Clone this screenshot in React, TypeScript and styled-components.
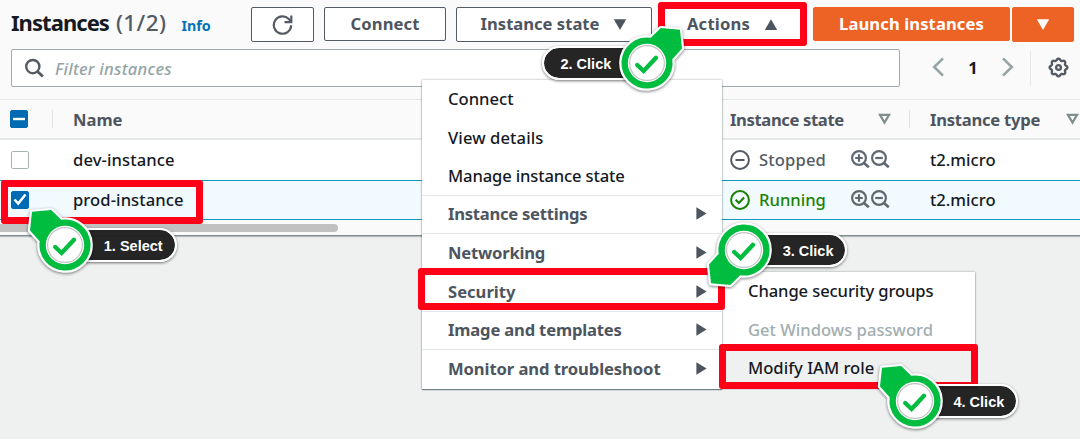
import React from 'react';
import styled, { createGlobalStyle, css } from 'styled-components';

const GlobalStyle = createGlobalStyle`
  *, *::before, *::after { box-sizing: border-box; }
  body {
    margin: 0;
    background: #eff1f1;
    font-family: 'Noto Sans', 'Open Sans', sans-serif;
    font-size: 16.6px;
    font-weight: 500;
    color: #16191f;
    overflow: hidden;
  }
`;

const Page = styled.div`
  position: relative;
  width: 1080px;
  height: 439px;
  overflow: hidden;
`;

const Panel = styled.section`
  background: #fafafa;
  border-bottom: 1px solid #7f8d8f;
  box-shadow: 0 1px 1px rgba(0, 28, 36, 0.25);
`;

const Text = styled.span<{ $track?: number }>`
  letter-spacing: ${({ $track = 0 }) => $track}px;
  white-space: nowrap;
`;

const Toolbar = styled.header`
  display: flex;
  align-items: flex-start;
  gap: 10px;
  height: 49px;
  padding: 7px 6px 0 11px;
`;

const Heading = styled.h1`
  display: flex;
  align-items: baseline;
  width: 230px;
  height: 34px;
  margin: 0;
  font-size: 22px;
  font-weight: 700;
  line-height: 31px;
`;

const Count = styled(Text)`
  margin-left: 7px;
  font-size: 22.5px;
  font-weight: 500;
  color: #545b64;
`;

const InfoLink = styled.a`
  margin-left: 15px;
  font-size: 14.3px;
  color: #0073bb;
`;

const Button = styled.button<{ $width: number; $primary?: boolean; $tall?: boolean }>`
  display: flex;
  align-items: center;
  justify-content: center;
  flex: none;
  width: ${({ $width }) => $width}px;
  height: ${({ $tall }) => ($tall ? 35 : 34)}px;
  padding: ${({ $tall }) => ($tall ? 0 : 1)}px 0 0;
  font: 700 16.6px/1 'Noto Sans', 'Open Sans', sans-serif;
  color: #4d555f;
  background: #fff;
  border: 1px solid #545b64;
  border-radius: 2px;
  ${({ $primary }) => $primary && css`
    color: #fff;
    background: #ec6325;
    border-color: #ec6325;
  `}
`;

const SplitButton = styled.div`
  display: flex;
  gap: 2px;
`;

const CaretSvg = styled.svg<{ $gap?: number }>`
  flex: none;
  margin-left: ${({ $gap = 0 }) => $gap}px;
`;

const FilterBar = styled.div`
  display: flex;
  align-items: center;
  height: 50px;
  padding: 0 11px 12px;
`;

const SearchField = styled.label`
  display: flex;
  align-items: center;
  gap: 11px;
  width: 889px;
  height: 38px;
  padding-left: 13px;
  background: #fff;
  border: 1px solid #9cabac;
  border-radius: 2px;
  font-style: italic;
  color: #95a5a6;
`;

const Pager = styled.nav`
  display: flex;
  align-items: center;
  justify-content: space-between;
  width: 82px;
  margin-left: 32px;
  padding-bottom: 2px;
  font-size: 16.5px;
  font-weight: 700;
`;

const Settings = styled.div`
  display: flex;
  align-items: center;
  justify-content: flex-end;
  width: 39px;
  height: 35px;
  margin-left: 16px;
  padding-bottom: 1px;
  border-left: 1px solid #e6e9e9;
`;

const Row = styled.div<{ $kind?: 'head' | 'selected' }>`
  display: grid;
  grid-template-columns: 52px 657px 200px 171px;
  align-items: center;
  height: 40px;
  background: #fff;
  ${({ $kind }) => $kind === 'head' && css`
    height: 41px;
    font-weight: 700;
    color: #4d555f;
    background: #fafafa;
    border-top: 1px solid #e6e9e9;
    border-bottom: 2px solid #e6e9e9;
  `}
  ${({ $kind }) => $kind === 'selected' && css`
    background: #f0faff;
    border-top: 1px solid #1598bf;
    border-bottom: 1px solid #1598bf;
  `}
`;

const HeadCell = styled.div`
  display: flex;
  align-items: center;
  justify-content: space-between;
  height: 18px;
  padding: 0 18px 0 20px;
  border-left: 1px solid #e0e4e4;
  &:nth-child(3) { border-color: transparent; }
  &:last-child { padding-right: 1px; }
`;

const CheckCell = styled.div<{ $inset?: number }>`
  display: flex;
  padding-left: ${({ $inset = 11 }) => $inset}px;
`;

const Cell = styled.div<{ $tone?: string }>`
  display: flex;
  align-items: center;
  padding-left: 21px;
  color: ${({ $tone = '#16191f' }) => $tone};
  & > span { padding-bottom: 2px; }
  & > svg { flex: none; margin-right: 9px; }
`;

const Magnifiers = styled.span`
  display: flex;
  gap: 1px;
  margin-left: auto;
  padding-right: 19px;
`;

const Checkbox = styled.span<{ $on?: boolean }>`
  display: flex;
  align-items: center;
  justify-content: center;
  width: 18px;
  height: 18px;
  margin-bottom: 1px;
  border: 1px solid ${({ $on }) => ($on ? '#006bb3' : '#a5b2b3')};
  border-radius: 2px;
  background: ${({ $on }) => ($on ? '#006bb3' : '#fff')};
`;

const ScrollTrack = styled.div`
  height: 15px;
  padding-top: 4px;
`;

const ScrollThumb = styled.div`
  width: 338px;
  height: 8px;
  border-radius: 0 4px 4px 0;
  background: #c1c1c1;
`;

const Menu = styled.div<{ $x: number; $y: number; $width: number }>`
  position: absolute;
  left: ${({ $x }) => $x}px;
  top: ${({ $y }) => $y}px;
  width: ${({ $width }) => $width}px;
  background: #fff;
  box-shadow: 0 1px 1px rgba(0, 28, 36, 0.45), 0 0 2px rgba(0, 28, 36, 0.4);
`;

const MenuItem = styled.div<{ $group?: boolean; $disabled?: boolean; $active?: boolean }>`
  display: flex;
  align-items: center;
  justify-content: space-between;
  height: 38.6px;
  padding: 0 14px 1.6px 26px;
  color: ${({ $disabled }) => ($disabled ? '#a2aeb0' : '#16191f')};
  background: ${({ $active }) => ($active ? '#eff1f1' : 'transparent')};
  ${({ $group }) => $group && css`
    font-weight: 700;
    color: #4d555f;
    padding-bottom: 2.2px;
    box-shadow: 0 -1px 0 #e3e7e7;
  `}
`;

const Highlight = styled.div<{ $x: number; $y: number; $w: number; $h: number }>`
  position: absolute;
  left: ${({ $x }) => $x}px;
  top: ${({ $y }) => $y}px;
  width: ${({ $w }) => $w}px;
  height: ${({ $h }) => $h}px;
  border: 7px solid #ff0018;
  border-radius: 3px;
`;

const CalloutBox = styled.div<{ $x: number; $y: number }>`
  position: absolute;
  left: ${({ $x }) => $x}px;
  top: ${({ $y }) => $y}px;
`;

const CalloutLabel = styled.div<{ $left?: boolean; $width: number }>`
  position: absolute;
  top: -17px;
  ${({ $left }) => ($left ? 'right: 0;' : 'left: 0;')}
  width: ${({ $width }) => $width}px;
  height: 34px;
  padding: ${({ $left }) => ($left ? '0 0 0 17px' : '0 0 0 37px')};
  border: 2px solid #fff;
  border-radius: ${({ $left }) => ($left ? '17px 0 0 17px' : '0 17px 17px 0')};
  background: rgba(30, 30, 30, 0.97);
  background-clip: padding-box;
  box-shadow: 0 1px 3px rgba(0, 0, 0, 0.55);
  font: 700 14.5px/32px 'Liberation Sans', Arial, sans-serif;
  color: #fff;
  white-space: nowrap;
`;

const CalloutMark = styled.svg`
  position: absolute;
  left: -42px;
  top: -42px;
  filter: drop-shadow(0 1px 1.5px rgba(0, 0, 0, 0.5));
`;

type CaretProps = { dir?: 'down' | 'up' | 'right'; gap?: number; color?: string };

function Caret({ dir = 'down', gap, color = 'currentColor' }: CaretProps) {
  const paths = { down: 'M.8 1.2h12.4L7 12Z', up: 'M.8 12h12.4L7 1.2Z', right: 'M2.4 .2v12.6L12.6 6.5Z' };
  return (
    <CaretSvg $gap={gap} width="14" height="13" viewBox="0 0 14 13">
      <path d={paths[dir]} fill={color} />
    </CaretSvg>
  );
}

function SortIcon() {
  return (
    <svg width="13" height="12" viewBox="0 0 13 12">
      <path d="M1.9 1.8h9.2L6.5 9.5Z" fill="#fff" stroke="#7f8d8e" strokeWidth="2.3" />
    </svg>
  );
}

function Zoom({ plus }: { plus?: boolean }) {
  return (
    <svg width="19" height="20" viewBox="0 0 19 20" fill="none" stroke="#5f6870" strokeWidth="2.2">
      <circle cx="8" cy="9" r="6.9" />
      <path d="M13 14l4.8 4.3" strokeWidth="2.6" />
      <path d={plus ? 'M4.2 9h7.6M8 5.2v7.6' : 'M4.2 9h7.6'} />
    </svg>
  );
}

function GearIcon() {
  const teeth = Array.from({ length: 64 }, (_, i) => {
    const a = (i / 64) * Math.PI * 2;
    const r = 8 + 0.9 * Math.cos(8 * a);
    return `${(10.5 + r * Math.cos(a)).toFixed(2)},${(10.5 + r * Math.sin(a)).toFixed(2)}`;
  }).join(' ');
  return (
    <svg width="21" height="21" viewBox="0 0 21 21" fill="none" stroke="#545b64" strokeWidth="2.4">
      <polygon points={teeth} strokeLinejoin="round" />
      <circle cx="10.5" cy="10.5" r="2.4" />
    </svg>
  );
}

type CalloutProps = {
  x: number;
  y: number;
  label: string;
  width: number;
  left?: boolean;
  flip?: 'x' | 'y';
};

const POINTER = 'M-33 -33.2L-13.8 -34.9L-3.8 -25.3A25.6 25.6 0 1 1 -25.3 -3.8L-35 -14.5Z';

function Callout({ x, y, label, width, left, flip }: CalloutProps) {
  const transform = flip === 'x' ? 'scale(-1 1)' : flip === 'y' ? 'scale(1 -1)' : undefined;
  return (
    <CalloutBox $x={x} $y={y}>
      <CalloutLabel $left={left} $width={width}>{label}</CalloutLabel>
      <CalloutMark width="84" height="84" viewBox="-42 -42 84 84">
        <g transform={transform}>
          <path d={POINTER} fill="#fff" stroke="#fff" strokeWidth="4.4" strokeLinejoin="round" />
          <path d={POINTER} fill="#00bd40" />
        </g>
        <circle r="19.2" fill="#fff" />
        <circle r="17.4" fill="#fff" stroke="#c4c4c4" strokeWidth="1.2" />
        <path d="M-9.8 2L-3.4 8L9 -5.2" fill="none" stroke="#00bd40" strokeWidth="4.4" strokeLinecap="round" />
      </CalloutMark>
    </CalloutBox>
  );
}

export default function App() {
  return (
    <Page>
      <GlobalStyle />
      <Panel>
        <Toolbar>
          <Heading>
            <Text $track={-0.95}>Instances</Text>
            <Count $track={0.4}>(1/2)</Count>
            <InfoLink><Text>Info</Text></InfoLink>
          </Heading>
          <Button $width={63} $tall aria-label="Refresh">
            <svg width="22" height="22" viewBox="0 0 22 22" fill="none" stroke="#545b64" strokeWidth="2.2">
              <path d="M19.2 11.3A8.7 8.7 0 1 1 16.8 5L19 7.6" />
              <path d="M19.3 1.5v6.6h-6.8" />
            </svg>
          </Button>
          <Button $width={122}><Text $track={0.1}>Connect</Text></Button>
          <Button $width={196} $tall><Text>Instance state</Text><Caret gap={14} /></Button>
          <Button $width={141}><Text $track={0.2}>Actions</Text><Caret dir="up" gap={14} /></Button>
          <SplitButton>
            <Button $width={197} $primary><Text $track={0.1}>Launch instances</Text></Button>
            <Button $width={62} $primary $tall aria-label="More launch options"><Caret /></Button>
          </SplitButton>
        </Toolbar>
        <FilterBar>
          <SearchField>
            <svg width="19" height="20" viewBox="0 0 19 20" fill="none" stroke="#545b64" strokeWidth="2.4">
              <circle cx="7.8" cy="8.6" r="6.6" />
              <path d="M12.5 13.4l5.4 5.2" strokeWidth="2.8" />
            </svg>
            <Text $track={0.24}>Filter instances</Text>
          </SearchField>
          <Pager>
            <svg width="12" height="20" viewBox="0 0 12 20" fill="none" stroke="#95a5a6" strokeWidth="2.6">
              <path d="M11 1.3L2.2 10l8.8 8.7" />
            </svg>
            <span>1</span>
            <svg width="12" height="20" viewBox="0 0 12 20" fill="none" stroke="#95a5a6" strokeWidth="2.6">
              <path d="M1 1.3L9.8 10L1 18.7" />
            </svg>
          </Pager>
          <Settings><GearIcon /></Settings>
        </FilterBar>
        <Row $kind="head">
          <CheckCell $inset={10}>
            <Checkbox $on>
              <svg width="12" height="4"><path d="M0 2h12" stroke="#fff" strokeWidth="2.4" /></svg>
            </Checkbox>
          </CheckCell>
          <HeadCell><Text>Name</Text></HeadCell>
          <HeadCell><Text $track={-0.36}>Instance state</Text><SortIcon /></HeadCell>
          <HeadCell><Text $track={-0.25}>Instance type</Text><SortIcon /></HeadCell>
        </Row>
        <Row>
          <CheckCell><Checkbox /></CheckCell>
          <Cell><Text $track={0.1}>dev-instance</Text></Cell>
          <Cell $tone="#545b64">
            <svg width="20" height="20" viewBox="0 0 20 20" fill="none" stroke="#545b64" strokeWidth="2">
              <circle cx="10" cy="10" r="8.9" /><path d="M5.5 10h9" />
            </svg>
            <Text $track={0.15}>Stopped</Text>
            <Magnifiers><Zoom plus /><Zoom /></Magnifiers>
          </Cell>
          <Cell><Text>t2.micro</Text></Cell>
        </Row>
        <Row $kind="selected">
          <CheckCell>
            <Checkbox $on>
              <svg width="14" height="13" viewBox="0 0 14 13">
                <path d="M1.5 6.5l3.7 4L12.5 1.5" fill="none" stroke="#fff" strokeWidth="2.5" />
              </svg>
            </Checkbox>
          </CheckCell>
          <Cell><Text $track={0.07}>prod-instance</Text></Cell>
          <Cell $tone="#1d8102">
            <svg width="20" height="20" viewBox="0 0 20 20" fill="none" stroke="#1d8102" strokeWidth="2">
              <circle cx="10" cy="10" r="8.9" /><path d="M5.7 9.8l3.2 3.2 5.2-5.4" strokeWidth="2.2" />
            </svg>
            <Text>Running</Text>
            <Magnifiers><Zoom plus /><Zoom /></Magnifiers>
          </Cell>
          <Cell><Text>t2.micro</Text></Cell>
        </Row>
        <ScrollTrack><ScrollThumb /></ScrollTrack>
      </Panel>

      <Menu $x={722} $y={272} $width={253}>
        <MenuItem><Text $track={-0.11}>Change security groups</Text></MenuItem>
        <MenuItem $disabled><Text>Get Windows password</Text></MenuItem>
        <MenuItem $active><Text>Modify IAM role</Text></MenuItem>
      </Menu>
      <Menu $x={422} $y={80} $width={300}>
        <MenuItem><Text>Connect</Text></MenuItem>
        <MenuItem><Text $track={0.1}>View details</Text></MenuItem>
        <MenuItem><Text $track={-0.15}>Manage instance state</Text></MenuItem>
        <MenuItem $group><Text $track={-0.25}>Instance settings</Text><Caret dir="right" /></MenuItem>
        <MenuItem $group><Text $track={-0.2}>Networking</Text><Caret dir="right" /></MenuItem>
        <MenuItem $group><Text>Security</Text><Caret dir="right" /></MenuItem>
        <MenuItem $group><Text $track={-0.17}>Image and templates</Text><Caret dir="right" /></MenuItem>
        <MenuItem $group><Text $track={-0.08}>Monitor and troubleshoot</Text><Caret dir="right" /></MenuItem>
      </Menu>

      <Highlight $x={1} $y={180} $w={202} $h={44} />
      <Highlight $x={658} $y={2} $w={149} $h={44} />
      <Highlight $x={418} $y={268} $w={307} $h={42} />
      <Highlight $x={719} $y={344} $w={259} $h={45} />

      <Callout x={64.8} y={245.3} label="1. Select" width={112} />
      <Callout x={646.5} y={63} label="2. Click" width={105} left flip="x" />
      <Callout x={743.7} y={249.5} label="3. Click" width={103} flip="y" />
      <Callout x={914.5} y={401.3} label="4. Click" width={103} />
    </Page>
  );
}
